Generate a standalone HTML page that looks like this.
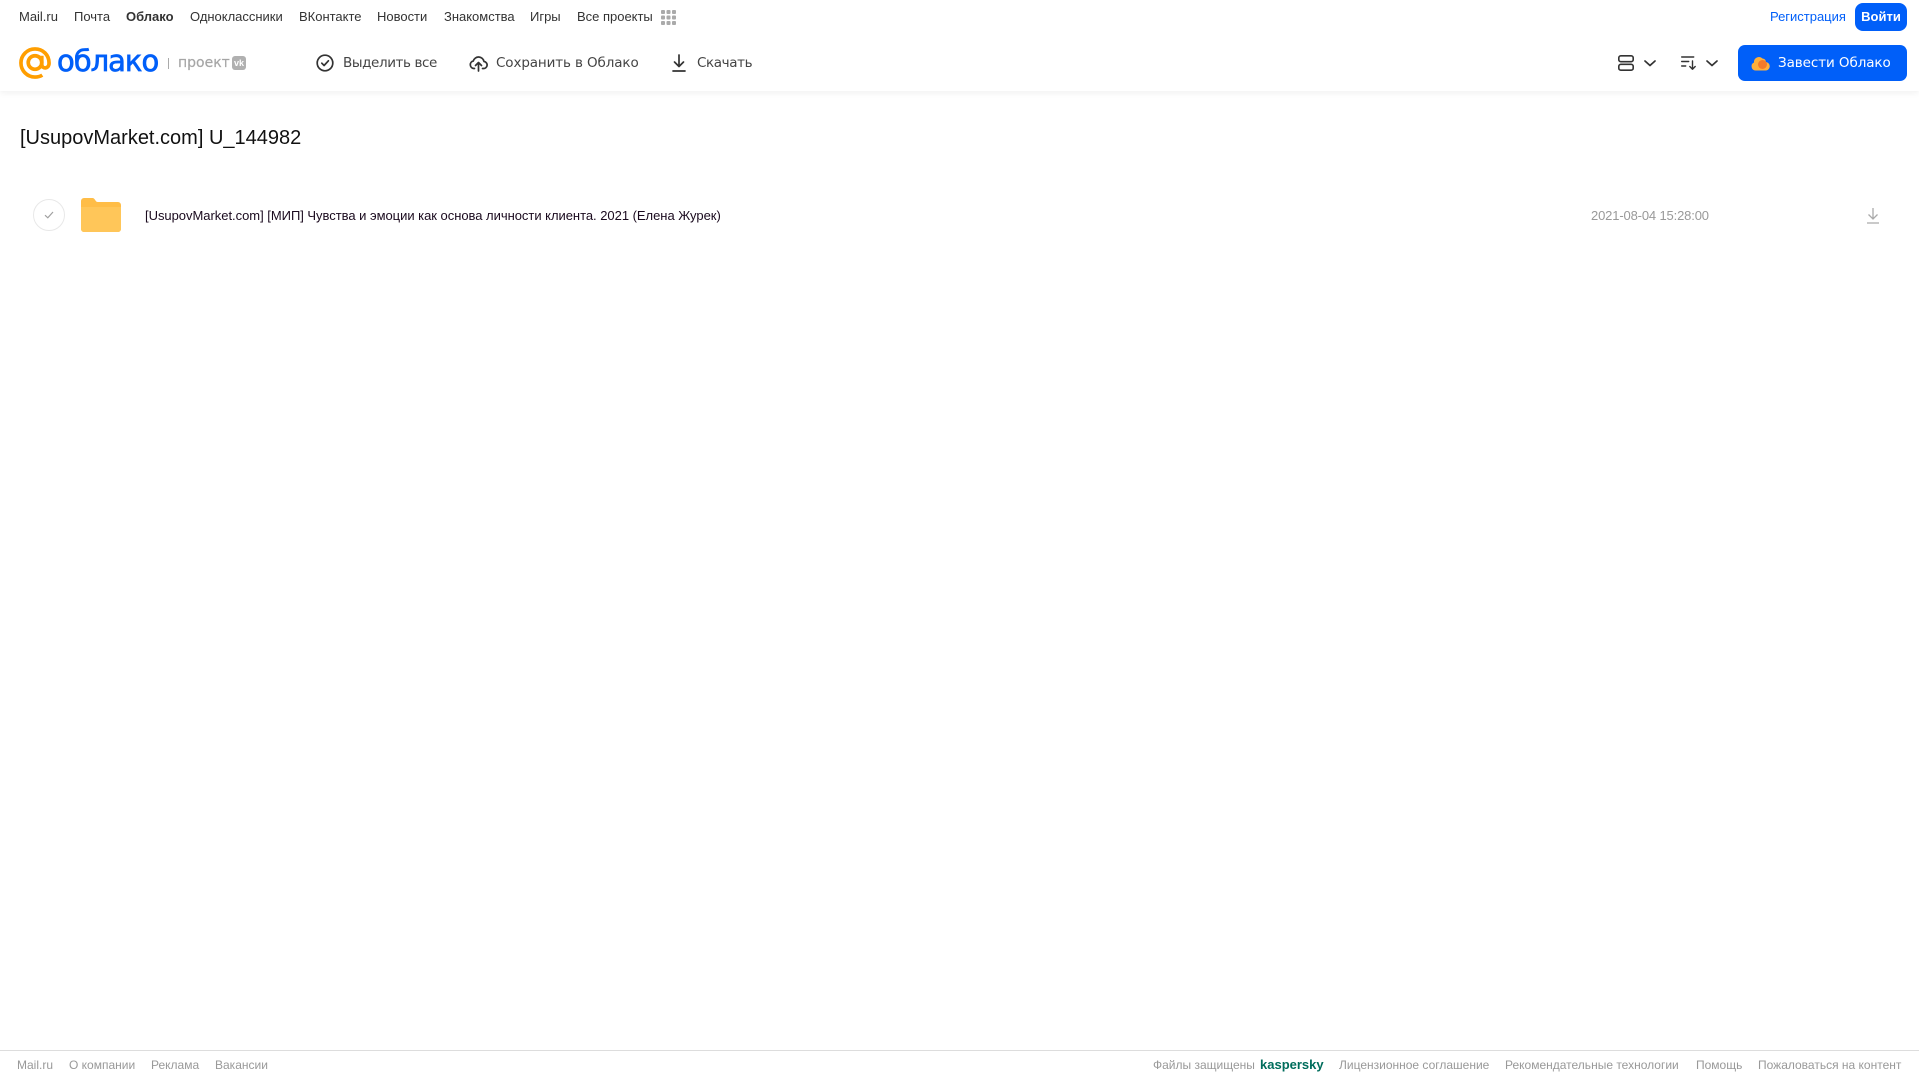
<!DOCTYPE html>
<html lang="ru"><head><meta charset="utf-8"><title>Облако</title>
<style>
html,body{margin:0;padding:0;background:#fff;width:1919px;height:1079px;overflow:hidden}
body{position:relative;font-family:"Liberation Sans","Noto Sans CJK SC",sans-serif}
.t{position:absolute;white-space:nowrap;line-height:20px;height:20px}
.n{top:7px;font-size:13px;color:#333;letter-spacing:-.01px}
.a{top:53px;color:#444;font-family:"DejaVu Sans",sans-serif;font-size:13.5px}
.f{top:1055px;font-size:12px;color:#999}
svg{position:absolute;overflow:visible}
</style></head><body>
<div style="position:absolute;left:0;top:0;width:1919px;height:91px;background:#fff;box-shadow:0 2px 6px rgba(0,0,0,.06)"></div>

<span class="t n" style="left:19px">Mail.ru</span>
<span class="t n" style="left:74px">Почта</span>
<span class="t n" style="left:126px;font-weight:bold">Облако</span>
<span class="t n" style="left:190px">Одноклассники</span>
<span class="t n" style="left:299px">ВКонтакте</span>
<span class="t n" style="left:377px">Новости</span>
<span class="t n" style="left:444px">Знакомства</span>
<span class="t n" style="left:530px">Игры</span>
<span class="t n" style="left:577px">Все проекты</span>
<svg style="left:661px;top:10px" width="15" height="15" fill="#aaa"><rect width="4" height="4" rx="1"/><rect x="5.500" width="4" height="4" rx="1"/><rect x="11" width="4" height="4" rx="1"/><rect y="5.500" width="4" height="4" rx="1"/><rect x="5.500" y="5.500" width="4" height="4" rx="1"/><rect x="11" y="5.500" width="4" height="4" rx="1"/><rect y="11" width="4" height="4" rx="1"/><rect x="5.500" y="11" width="4" height="4" rx="1"/><rect x="11" y="11" width="4" height="4" rx="1"/></svg>

<span class="t n" style="left:1770px;color:#005ff9">Регистрация</span>
<div style="position:absolute;left:1855px;top:3px;width:52px;height:28px;border-radius:8px;background:#005ff9;color:#fff;font-size:13px;font-weight:bold;line-height:27px;text-align:center">Войти</div>

<svg style="left:19px;top:47px" width="32" height="32" viewBox="0 0 33 33" fill="none" stroke="#ff9e00" stroke-width="3.800"><circle cx="16.500" cy="16" r="7"/><path d="M23.500 9v9c0 5 7.500 5 7.500-1.500C31 8 24.500 2 16.500 2S2 8.500 2 16.500 8.500 31 16.500 31c3 0 5.500-.7 7.500-2"/></svg>
<span style="position:absolute;left:57px;top:41px;font-size:29px;line-height:40px;color:#005ff9;font-family:'DejaVu Sans',sans-serif;-webkit-text-stroke:.7px #005ff9;white-space:nowrap;letter-spacing:-1px">облако</span>
<div style="position:absolute;left:168px;top:58px;width:1px;height:11px;background:#aaa"></div>
<span class="t" style="left:178px;top:53px;font-size:14px;font-family:'DejaVu Sans',sans-serif;color:#a6a6a6;-webkit-text-stroke:.2px #a6a6a6">проект</span>
<div style="position:absolute;left:232px;top:56px;width:14px;height:14px;border-radius:3px;background:#b0b0b0;color:#fff;font-size:9px;font-weight:bold;line-height:14px;text-align:center">vk</div>

<svg style="left:316px;top:54px" width="18" height="18" viewBox="0 0 18 18" fill="none" stroke="#333" stroke-width="1.700"><circle cx="9" cy="9" r="7.800"/><path d="M5.800 9.200l2.300 2.300 4.300-4.700" stroke-linecap="round" stroke-linejoin="round"/></svg>
<span class="t a" style="left:343px;letter-spacing:-.4px">Выделить все</span>

<svg style="left:469px;top:54px" width="19" height="18" viewBox="0 0 19 18" fill="none" stroke="#333" stroke-width="1.700" stroke-linecap="round" stroke-linejoin="round"><path d="M5.500 14.500H4.800A3.800 3.800 0 0 1 4.300 7 5.500 5.500 0 0 1 15 7.500a3.500 3.500 0 0 1-.8 7h-.7"/><path d="M9.500 17V9M6.500 11.500l3-3 3 3"/></svg>
<span class="t a" style="left:496px;letter-spacing:-.12px">Сохранить в Облако</span>

<svg style="left:672px;top:54px" width="14" height="18" viewBox="0 0 14 18" fill="none" stroke="#333" stroke-width="1.700" stroke-linecap="round" stroke-linejoin="round"><path d="M7 1v11.500M2.500 8l4.500 4.500L11.500 8M1 17h12"/></svg>
<span class="t a" style="left:697px;letter-spacing:-.4px">Скачать</span>

<svg style="left:1618px;top:55px" width="16" height="16" viewBox="0 0 16 16" fill="none" stroke="#333" stroke-width="1.600"><rect x=".8" y=".8" width="14.400" height="5.900" rx="2"/><rect x=".8" y="9.300" width="14.400" height="5.900" rx="2"/></svg>
<svg style="left:1644px;top:60px" width="12" height="7" viewBox="0 0 12 7" fill="none" stroke="#333" stroke-width="1.700" stroke-linecap="round" stroke-linejoin="round"><path d="M1 1l5 4.500L11 1"/></svg>
<svg style="left:1681px;top:56px" width="16" height="14" viewBox="0 0 16 14" fill="none" stroke="#333" stroke-width="1.400" stroke-linecap="round" stroke-linejoin="round"><path d="M.7 1h12M.7 5.500h7M.7 10h4M11.500 5v8M8.800 10.500l2.700 2.700 2.700-2.700"/></svg>
<svg style="left:1706px;top:60px" width="12" height="7" viewBox="0 0 12 7" fill="none" stroke="#333" stroke-width="1.700" stroke-linecap="round" stroke-linejoin="round"><path d="M1 1l5 4.500L11 1"/></svg>

<div style="position:absolute;left:1738px;top:45px;width:169px;height:36px;border-radius:7px;background:#005ff9"></div>
<svg style="left:1751px;top:55px" width="19" height="16" viewBox="0 0 19 16"><path d="M4.500 15.500a4.200 4.200 0 0 1-1.500-8A5 5 0 0 1 11.500 3.500 4 4 0 0 1 15 7a4.300 4.300 0 0 1 .2 8.500z" fill="#ffb03a"/><circle cx="11.500" cy="9.500" r="4.500" fill="#f47a2a"/></svg>
<span class="t a" style="left:1778px;color:#fff;letter-spacing:-.08px">Завести Облако</span>

<span style="position:absolute;left:20px;top:124px;font-size:20px;line-height:28px;color:#111;white-space:nowrap">[UsupovMarket.com] U_144982</span>

<div style="position:absolute;left:33px;top:199px;width:30px;height:30px;border:1px solid #e8e8e8;border-radius:50%"></div>
<svg style="left:44px;top:211px" width="10" height="8" viewBox="0 0 10 8" fill="none" stroke="#a0a0a0" stroke-width="1.200"><path d="M1 4.200l2.800 2.600L9 1"/></svg>
<svg style="left:81px;top:198px" width="40" height="34" viewBox="0 0 40 34"><path d="M3 0h8c2 0 2.500 1 3.500 2.500S16 4 18 4h19a3 3 0 0 1 3 3v24a3 3 0 0 1-3 3H3a3 3 0 0 1-3-3V3a3 3 0 0 1 3-3z" fill="#ffbd47"/><path d="M0 9h40v22a3 3 0 0 1-3 3H3a3 3 0 0 1-3-3z" fill="#ffc659"/></svg>
<span class="t" style="left:145px;top:206px;font-size:13px;color:#1a0a1e;letter-spacing:-.03px">[UsupovMarket.com] [МИП] Чувства и эмоции как основа личности клиента. 2021 (Елена Журек)</span>
<span class="t" style="left:1591px;top:206px;font-size:13px;color:#999;letter-spacing:-.15px">2021-08-04 15:28:00</span>
<svg style="left:1866px;top:207px" width="14" height="17" viewBox="0 0 14 17" fill="none" stroke="#aaa" stroke-width="1.300"><path d="M7 1v11M2.500 7.500L7 12l4.500-4.500M1 16h12"/></svg>

<div style="position:absolute;left:0;top:1050px;width:1919px;height:1px;background:#ddd"></div>
<span class="t f" style="left:17px">Mail.ru</span>
<span class="t f" style="left:69px">О компании</span>
<span class="t f" style="left:151px">Реклама</span>
<span class="t f" style="left:215px">Вакансии</span>
<span class="t f" style="left:1153px">Файлы защищены</span>
<span class="t f" style="left:1260px;color:#006d5c;font-weight:bold;font-size:13px">kaspersky</span>
<span class="t f" style="left:1339px">Лицензионное соглашение</span>
<span class="t f" style="left:1505px">Рекомендательные технологии</span>
<span class="t f" style="left:1696px">Помощь</span>
<span class="t f" style="left:1758px">Пожаловаться на контент</span>
</body></html>
